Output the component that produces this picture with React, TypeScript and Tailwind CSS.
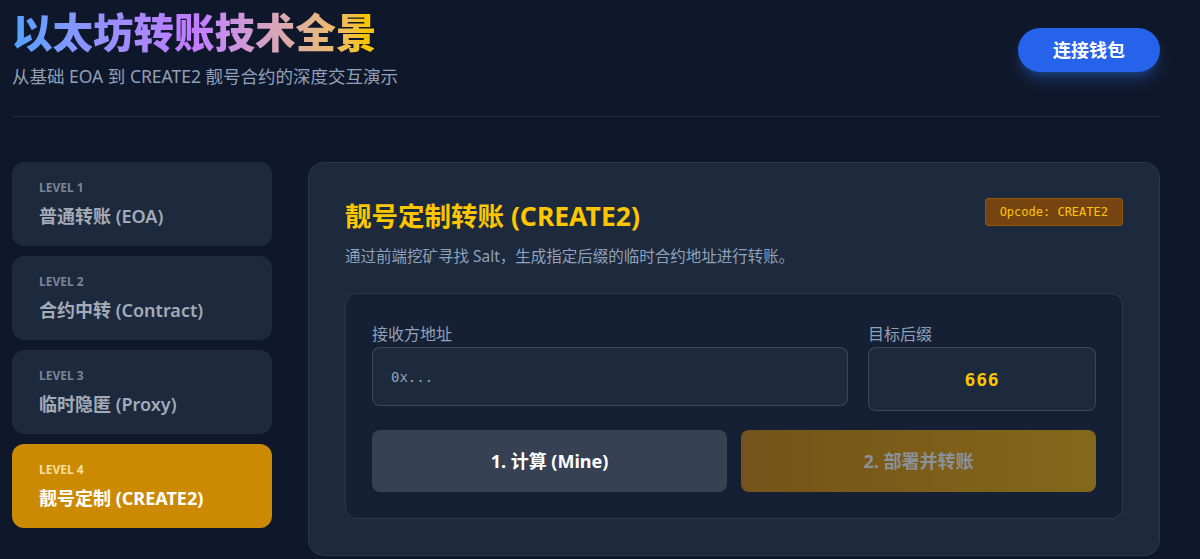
import { useState } from 'react';

interface Level {
  id: number;
  label: string;
  title: string;
}

const LEVELS: Level[] = [
  { id: 1, label: 'LEVEL 1', title: '普通转账 (EOA)' },
  { id: 2, label: 'LEVEL 2', title: '合约中转 (Contract)' },
  { id: 3, label: 'LEVEL 3', title: '临时隐匿 (Proxy)' },
  { id: 4, label: 'LEVEL 4', title: '靓号定制 (CREATE2)' },
];

const SANS = { fontFamily: '"Noto Sans", "Noto Sans CJK SC", sans-serif' };
const MONO = { fontFamily: '"DejaVu Sans Mono", monospace' };

export default function App() {
  const [active, setActive] = useState(4);
  const [address, setAddress] = useState('');
  const [suffix, setSuffix] = useState('666');

  return (
    <div className="min-h-screen bg-[#0f172a] text-white" style={SANS}>
      <div className="ml-3 w-[1148px]">
        {/* header */}
        <header className="flex items-center justify-between border-b border-slate-800 pt-3 pb-7">
          <div>
            <h1 className="w-fit bg-gradient-to-r from-blue-400 via-purple-400 to-yellow-400 bg-clip-text text-[40.5px] leading-[42px] font-black text-transparent">
              以太坊转账技术全景
            </h1>
            <p className="mt-2.5 text-[17.5px] leading-6 text-slate-400">
              从基础 EOA 到 CREATE2 靓号合约的深度交互演示
            </p>
          </div>
          <button className="h-11 rounded-full bg-[#2563eb] px-[35px] text-lg font-bold text-white shadow-lg shadow-blue-500/30">
            连接钱包
          </button>
        </header>

        <div className="mt-[45px] flex items-start gap-9">
          {/* sidebar */}
          <nav className="flex w-[260px] flex-col gap-2.5">
            {LEVELS.map((lv) => {
              const on = lv.id === active;
              return (
                <button
                  key={lv.id}
                  onClick={() => setActive(lv.id)}
                  className={`flex h-[84px] flex-col items-start justify-start rounded-xl px-[27px] pt-[18px] text-left ${
                    on ? 'bg-[#cc8a04]' : 'bg-slate-800'
                  }`}
                >
                  <div className={`text-xs leading-4 font-bold ${on ? 'text-yellow-100/80' : 'text-[#7c8594]'}`}>
                    {lv.label}
                  </div>
                  <div className={`mt-2 text-lg leading-6 ${on ? 'font-bold text-white' : 'font-semibold text-[#a3abb8]'}`}>
                    {lv.title}
                  </div>
                </button>
              );
            })}
          </nav>

          {/* main panel */}
          <section className="flex-1 rounded-2xl border border-slate-700/60 bg-slate-800 px-9 pt-[37px] pb-9">
            <div className="flex items-start justify-between">
              <div>
                <h2 className="text-[26.5px] leading-8 font-bold text-yellow-400">靓号定制转账 (CREATE2)</h2>
                <p className="mt-3.5 text-[15.5px] leading-5 text-slate-400">
                  通过前端挖矿寻找 Salt，生成指定后缀的临时合约地址进行转账。
                </p>
              </div>
              <span
                className="mt-[-2px] rounded border border-yellow-700/60 bg-[#764410] px-[14px] py-[5px] text-xs leading-4 text-yellow-400"
                style={MONO}
              >
                Opcode: CREATE2
              </span>
            </div>

            <div className="mt-[27px] rounded-xl border border-slate-700/70 bg-slate-900/50 px-[26px] pt-[29px] pb-[26px]">
              <div className="grid grid-cols-3 gap-5">
                <label className="col-span-2 block">
                  <span className="block text-base leading-[22px] text-slate-400">接收方地址</span>
                  <input
                    value={address}
                    onChange={(e) => setAddress(e.target.value)}
                    placeholder="0x..."
                    className="mt-0.5 h-[59px] w-full rounded-lg border border-slate-600/70 bg-slate-800 px-[18px] text-sm text-slate-200 outline-none placeholder:text-slate-400"
                    style={MONO}
                  />
                </label>
                <label className="block">
                  <span className="block text-base leading-[22px] text-slate-400">目标后缀</span>
                  <input
                    value={suffix}
                    onChange={(e) => setSuffix(e.target.value)}
                    className="mt-0.5 h-16 w-full rounded-lg border border-slate-600/70 bg-slate-800 text-center text-lg font-bold tracking-wider text-yellow-400 outline-none"
                    style={MONO}
                  />
                </label>
              </div>

              <div className="mt-[19px] grid grid-cols-2 gap-3.5">
                <button className="h-[62px] rounded-lg bg-gray-700 text-lg font-bold text-white">
                  1. 计算 (Mine)
                </button>
                <button
                  disabled
                  className="h-[62px] rounded-lg bg-gradient-to-r from-yellow-600 to-yellow-500 text-lg font-bold text-white opacity-50"
                >
                  2. 部署并转账
                </button>
              </div>
            </div>
          </section>
        </div>
      </div>
    </div>
  );
}
